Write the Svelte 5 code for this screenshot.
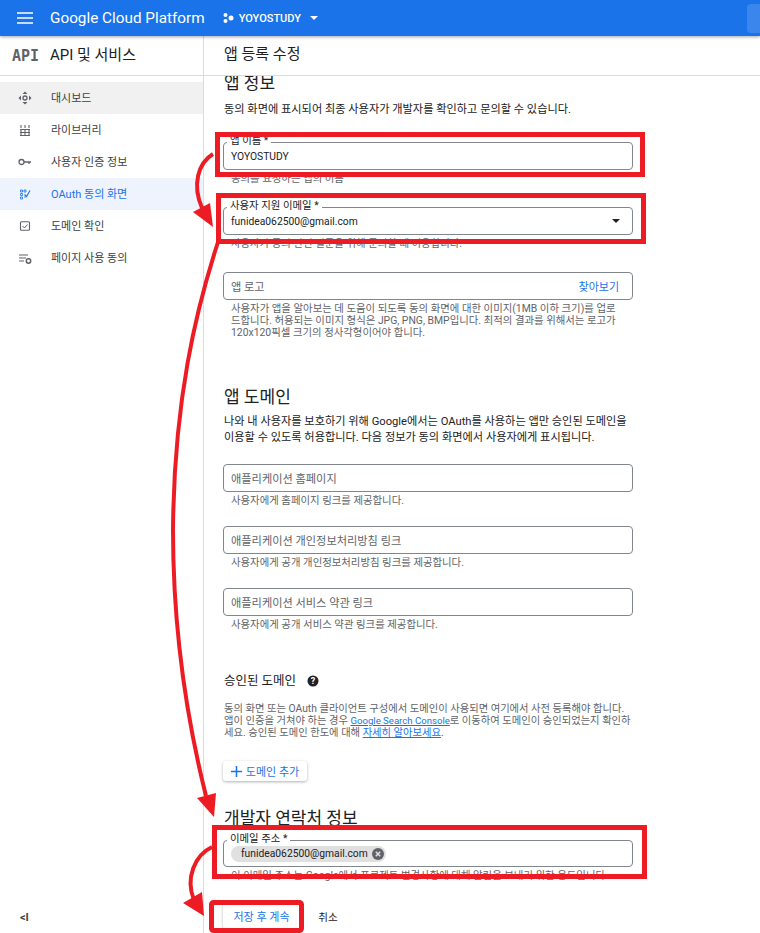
<script>
	const navItems = [
		{ label: '대시보드', icon: 'dash', hover: true },
		{ label: '라이브러리', icon: 'lib' },
		{ label: '사용자 인증 정보', icon: 'key' },
		{ label: 'OAuth 동의 화면', icon: 'oauth', active: true },
		{ label: '도메인 확인', icon: 'check' },
		{ label: '페이지 사용 동의', icon: 'page' }
	];

	const domainFields = [
		{ placeholder: '애플리케이션 홈페이지', help: '사용자에게 홈페이지 링크를 제공합니다.' },
		{ placeholder: '애플리케이션 개인정보처리방침 링크', help: '사용자에게 공개 개인정보처리방침 링크를 제공합니다.' },
		{ placeholder: '애플리케이션 서비스 약관 링크', help: '사용자에게 공개 서비스 약관 링크를 제공합니다.' }
	];
</script>

<div class="page">
	<header class="topbar">
		<svg class="menu" width="16" height="12" viewBox="0 0 16 12"><path d="M0 1h16M0 6h16M0 11h16" stroke="#fff" stroke-width="1.4" /></svg>
		<span class="brand">Google Cloud Platform</span>
		<svg class="dots" width="11" height="10" viewBox="0 0 11 10" fill="#fff"><circle cx="2.5" cy="2" r="2" /><circle cx="2.5" cy="8" r="2" /><circle cx="8" cy="5" r="2.5" /></svg>
		<span class="project">YOYOSTUDY</span>
		<span class="caret"></span>
		<span class="search"></span>
	</header>

	<div class="body">
		<aside class="sidebar">
			<div class="side-head">
				<span class="api">API</span>
				<span class="side-title">API 및 서비스</span>
			</div>
			<nav class="nav">
				{#each navItems as item}
					<div class="nav-item" class:hover={item.hover} class:active={item.active}>
						<svg class="nav-icon" width="14" height="14" viewBox="0 0 14 14" fill="none" stroke="currentColor">
							{#if item.icon === 'dash'}
								<circle cx="7" cy="7" r="2" stroke-width="1.3" />
								<path d="M7 0.5l2.500 2.500h-5zM7 13.500l2.500-2.500h-5zM0.500 7l2.500-2.500v5zM13.500 7l-2.500-2.500v5z" fill="currentColor" stroke="none" />
							{:else if item.icon === 'lib'}
								<path d="M3 2v3M7 2v3M11 2v3M3 7v5M7 7v5M11 7v5M2 6.500h10M2 9.500h10M2 12.500h10" stroke-width="1.100" />
							{:else if item.icon === 'key'}
								<circle cx="3.500" cy="7" r="2.500" stroke-width="1.300" />
								<path d="M6 7h7M11 7v2" stroke-width="1.300" />
							{:else if item.icon === 'oauth'}
								<path d="M2.500 3h2v2h-2zM2.500 6.500h2v2h-2zM2.500 10h2v2h-2zM6 3h2v2H6zM6 10h2" stroke-width="0.800" />
								<path d="M6.500 7.500l2 2 3.500-6" stroke-width="1.100" />
							{:else if item.icon === 'check'}
								<rect x="2.500" y="2.800" width="9" height="8.500" rx="1" stroke-width="1.100" />
								<path d="M4.500 7l2 2 3-3.500" stroke-width="1" />
							{:else}
								<path d="M1 4h9M1 7h7M1 10h5" stroke-width="1.100" />
								<circle cx="10.500" cy="10" r="2.200" stroke-width="1.500" />
							{/if}
						</svg>
						<span>{item.label}</span>
					</div>
				{/each}
			</nav>
			<div class="collapse">&lt;I</div>
		</aside>

		<div class="content">
			<div class="content-head">앱 등록 수정</div>
			<main class="form">
				<h2 class="first">앱 정보</h2>
				<p class="lead">동의 화면에 표시되어 최종 사용자가 개발자를 확인하고 문의할 수 있습니다.</p>

				<div class="field f-name">
					<span class="float">앱 이름 *</span>
					<span class="value">YOYOSTUDY</span>
				</div>
				<p class="help">동의를 요청하는 앱의 이름</p>

				<div class="field f-mail">
					<span class="float">사용자 지원 이메일 *</span>
					<span class="value">funidea062500@gmail.com</span>
					<span class="select-caret"></span>
				</div>
				<p class="help">사용자가 동의 관련 질문을 위해 문의할 때 이용합니다.</p>

				<div class="field f-logo">
					<span class="ph">앱 로고</span>
					<span class="browse">찾아보기</span>
				</div>
				<p class="help">사용자가 앱을 알아보는 데 도움이 되도록 동의 화면에 대한 이미지(1MB 이하 크기)를 업로드합니다. 허용되는 이미지 형식은 JPG, PNG, BMP입니다. 최적의 결과를 위해서는 로고가 120x120픽셀 크기의 정사각형이어야 합니다.</p>

				<h2 class="domain">앱 도메인</h2>
				<p class="lead tall">나와 내 사용자를 보호하기 위해 Google에서는 OAuth를 사용하는 앱만 승인된 도메인을 이용할 수 있도록 허용합니다. 다음 정보가 동의 화면에서 사용자에게 표시됩니다.</p>

				{#each domainFields as f, i}
					<div class="field f-domain" class:top={i === 0}>
						<span class="ph">{f.placeholder}</span>
					</div>
					<p class="help">{f.help}</p>
				{/each}

				<div class="auth-head">
					<span>승인된 도메인</span>
					<svg width="12" height="12" viewBox="0 0 12 12"><circle cx="6" cy="6" r="5.500" fill="#202124" /><text x="6" y="9" text-anchor="middle" class="q">?</text></svg>
				</div>
				<p class="note">동의 화면 또는 OAuth 클라이언트 구성에서 도메인이 사용되면 여기에서 사전 등록해야 합니다. 앱이 인증을 거쳐야 하는 경우 <a class="gsc" href="#a">Google Search Console</a>로 이동하여 도메인이 승인되었는지 확인하세요. 승인된 도메인 한도에 대해 <a href="#a">자세히 알아보세요</a>.</p>

				<button class="add">
					<svg width="11" height="11" viewBox="0 0 11 11"><path d="M5.500 0v11M0 5.500h11" stroke="#1a73e8" stroke-width="1.500" /></svg>
					도메인 추가
				</button>

				<h2 class="dev">개발자 연락처 정보</h2>
				<div class="field f-contact">
					<span class="float">이메일 주소 *</span>
					<span class="chip">
						funidea062500@gmail.com
						<svg width="12" height="12" viewBox="0 0 12 12"><circle cx="6" cy="6" r="6" fill="#5f6368" /><path d="M3.800 3.800l4.400 4.400M8.200 3.800l-4.400 4.400" stroke="#e0e0e0" stroke-width="1.500" /></svg>
					</span>
				</div>
				<p class="help">이 이메일 주소는 Google에서 프로젝트 변경사항에 대해 알림을 보내기 위한 용도입니다.</p>

				<div class="actions">
					<button class="save">저장 후 계속</button>
					<button class="cancel">취소</button>
				</div>
			</main>
		</div>
	</div>

	<!-- screenshot annotations painted over the page -->
	<svg class="marks" width="760" height="933" viewBox="0 0 760 933" fill="none" stroke="#ed1c24">
		<g stroke-width="5">
			<rect x="217.500" y="134.500" width="425" height="40" />
			<rect x="218.500" y="195.500" width="425" height="46" />
			<rect x="214.500" y="827.500" width="430" height="49" />
			<rect x="211.500" y="902.500" width="90" height="28" rx="2" />
		</g>
		<g stroke-width="4">
			<path d="M213 154 C198 163 192 185 202 208" />
			<path d="M218 242 C196 310 174 400 173 530 C173 630 187 720 206 796" />
			<path d="M212 847 C195 855 185 878 194 900" />
		</g>
		<g fill="#ed1c24" stroke="none">
			<path d="M193 212 L213 227 L210 203 Z" />
			<path d="M197 798 L214 817 L216 793 Z" />
			<path d="M183 903 L204 916 L202 892 Z" />
		</g>
	</svg>
</div>

<style>
	:global(body) {
		margin: 0;
		background: #fff;
	}

	.page {
		position: relative;
		width: 760px;
		height: 933px;
		overflow: hidden;
		display: flex;
		flex-direction: column;
		font-family: Roboto, "Noto Sans CJK KR", sans-serif;
		color: #202124;
	}

	.topbar {
		position: relative;
		z-index: 2;
		flex: 0 0 36px;
		display: flex;
		align-items: center;
		background: #1a73e8;
		box-shadow: 0 1px 3px rgba(0, 0, 0, 0.35);
		color: #fff;
	}

	.menu {
		margin-left: 17px;
	}

	.brand {
		margin-left: 17px;
		font-size: 15.300px;
		white-space: nowrap;
	}

	.dots {
		margin-left: 18px;
	}

	.project {
		margin-left: 5px;
		font-size: 11px;
		font-weight: 500;
	}

	.caret {
		margin-left: 9px;
		border-left: 4.500px solid transparent;
		border-right: 4.500px solid transparent;
		border-top: 4.500px solid #fff;
	}

	.search {
		margin-left: auto;
		width: 19px;
		height: 29px;
		margin-right: -6px;
		background: #3b86ec;
		border-radius: 4px;
	}

	.body {
		flex: 1;
		display: flex;
		min-height: 0;
	}

	.sidebar {
		position: relative;
		flex: 0 0 203px;
		border-right: 1px solid #dadce0;
	}

	.side-head {
		height: 39px;
		display: flex;
		align-items: center;
		border-bottom: 1px solid #dadce0;
	}

	.api {
		width: 50px;
		padding-left: 12px;
		box-sizing: border-box;
		font-family: "DejaVu Sans Mono", monospace;
		font-size: 15px;
		font-weight: 700;
		color: #5f6368;
	}

	.side-title {
		position: relative;
		top: -2px;
		font-size: 15px;
		color: #202124;
	}

	.nav {
		margin-top: 6px;
	}

	.nav-item {
		box-sizing: border-box;
		height: 32px;
		padding-bottom: 3px;
		display: flex;
		align-items: center;
		font-size: 11px;
		color: #3c4043;
	}

	.nav-item.hover {
		background: #f1f1f1;
	}

	.nav-item.active {
		background: #eef3fd;
		color: #1a73e8;
	}

	.nav-icon {
		margin: 3px 19.500px 0 17.500px;
		color: #5f6368;
	}

	.nav-item.active .nav-icon {
		color: #1a73e8;
	}

	.collapse {
		position: absolute;
		left: 20px;
		bottom: 9px;
		font-size: 11px;
		font-weight: 700;
		color: #3c4043;
	}

	.content {
		flex: 1;
		min-width: 0;
		display: flex;
		flex-direction: column;
	}

	.content-head {
		flex: 0 0 40px;
		box-sizing: border-box;
		padding: 9px 20px 0;
		font-size: 15px;
		line-height: 18px;
		border-bottom: 1px solid #dadce0;
	}

	.form {
		position: relative;
		flex: 1;
		overflow: hidden;
		padding-left: 19px;
		width: 410px;
	}

	h2 {
		margin: 0;
		padding-left: 1px;
		font-size: 17px;
		font-weight: 400;
		line-height: 20px;
	}

	h2.first {
		line-height: 15px;
	}

	.lead {
		margin: 11px 0 0;
		padding-left: 1px;
		font-size: 11.200px;
		line-height: 16px;
		color: #202124;
	}

	.lead.tall {
		margin-top: 7px;
		width: 405px;
	}

	.field {
		position: relative;
		box-sizing: border-box;
		height: 28px;
		display: flex;
		align-items: center;
		padding: 0 7px;
		border: 1px solid #80868b;
		border-radius: 4px;
		font-size: 10.300px;
		color: #202124;
	}

	.f-name {
		margin-top: 24px;
	}

	.f-mail {
		margin-top: 22px;
	}

	.f-logo {
		margin-top: 22px;
		justify-content: space-between;
		padding-right: 13px;
	}

	.f-domain {
		margin-top: 19px;
	}

	.f-domain.top {
		margin-top: 18px;
	}

	.f-contact {
		margin-top: 12px;
		height: 27px;
	}

	.float {
		position: absolute;
		top: -8px;
		left: 3px;
		padding: 0 3px;
		background: #fff;
		font-size: 10.400px;
		line-height: 12px;
	}

	.ph {
		font-size: 11.200px;
		color: #5f6368;
	}

	.browse {
		font-size: 11px;
		color: #1a73e8;
	}

	.select-caret {
		position: absolute;
		right: 12px;
		top: 11px;
		border-left: 4px solid transparent;
		border-right: 4px solid transparent;
		border-top: 4px solid #202124;
	}

	.help {
		margin: 3px 0 0;
		padding: 0 8px;
		font-size: 10.400px;
		line-height: 12px;
		color: #5f6368;
	}

	.domain {
		margin-top: 48px;
	}

	.auth-head {
		margin-top: 42px;
		padding-left: 1px;
		display: flex;
		align-items: center;
		gap: 11px;
		font-size: 12.500px;
		line-height: 16px;
	}

	.q {
		fill: #fff;
		font-size: 9px;
		font-weight: 700;
	}

	.note {
		margin: 14px 0 0;
		padding-left: 1px;
		font-size: 10.300px;
		line-height: 12px;
		color: #5f6368;
	}

	.note a {
		color: #1a73e8;
		text-decoration: underline;
	}

	.note a.gsc {
		font-size: 9.600px;
	}

	button {
		font-family: inherit;
		cursor: pointer;
	}

	.add {
		margin-top: 22px;
		height: 20px;
		width: 84px;
		display: flex;
		align-items: center;
		justify-content: center;
		gap: 4px;
		padding: 0;
		border: 0;
		border-radius: 3px;
		background: #fff;
		box-shadow: 0 1px 3px rgba(60, 64, 67, 0.4);
		font-size: 11px;
		color: #1a73e8;
	}

	.dev {
		margin-top: 27px;
	}

	.chip {
		display: inline-flex;
		align-items: center;
		gap: 4px;
		height: 16px;
		padding: 0 2px 0 10px;
		border-radius: 8px;
		background: #e0e0e0;
		font-size: 10.300px;
	}

	.actions {
		margin-top: 21px;
		display: flex;
		align-items: center;
	}

	.save {
		width: 77px;
		height: 26px;
		border: 0;
		border-radius: 3px;
		background: #fff;
		box-shadow: 0 1px 3px rgba(60, 64, 67, 0.4);
		font-size: 11px;
		color: #1a73e8;
	}

	.cancel {
		margin-left: 8px;
		width: 40px;
		border: 0;
		background: none;
		font-size: 10.500px;
		color: #202124;
	}

	.marks {
		position: absolute;
		left: 0;
		top: 0;
		z-index: 3;
		pointer-events: none;
	}
</style>
